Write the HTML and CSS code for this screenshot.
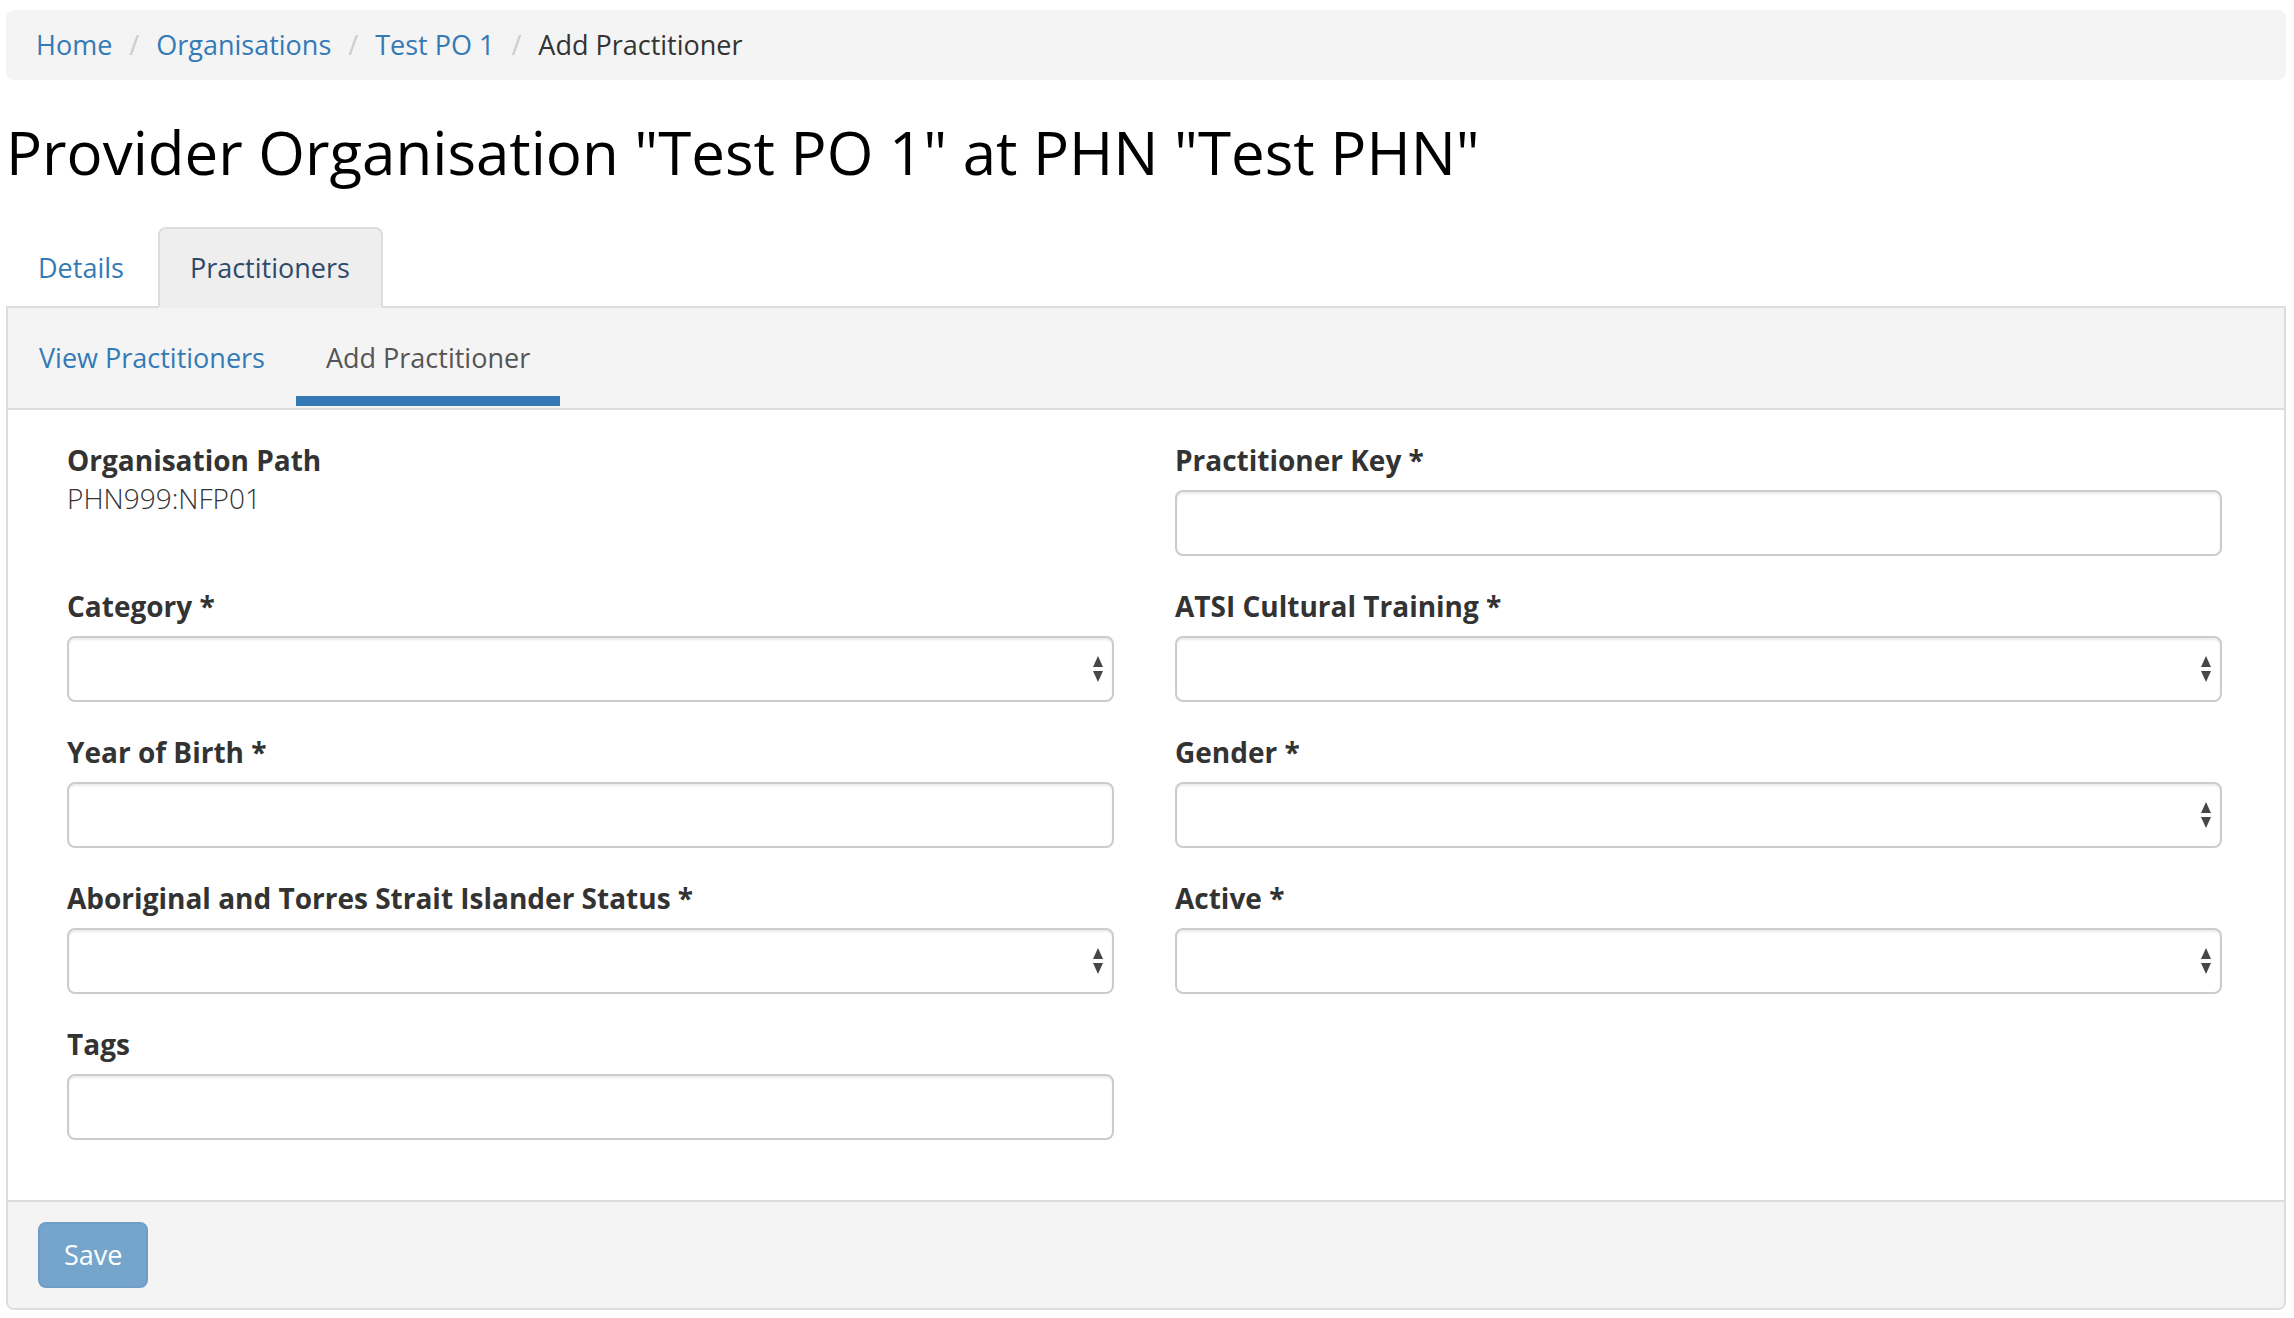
FILE: index.html
```html
<!DOCTYPE html>
<html lang="en">
<head>
<meta charset="utf-8">
<title>Add Practitioner</title>
<link rel="stylesheet" href="styles.css">
</head>
<body>
<div class="page">
  <ol class="breadcrumb">
    <li><a href="#">Home</a></li>
    <li><a href="#">Organisations</a></li>
    <li><a href="#">Test PO 1</a></li>
    <li class="active">Add Practitioner</li>
  </ol>

  <h1 class="title">Provider Organisation "Test PO 1" at PHN "Test PHN"</h1>

  <ul class="tabs">
    <li class="tab"><a href="#">Details</a></li>
    <li class="tab active"><a href="#">Practitioners</a></li>
  </ul>

  <div class="panel">
    <nav class="subnav">
      <a class="subtab" href="#">View Practitioners</a>
      <a class="subtab active" href="#">Add Practitioner</a>
    </nav>

    <form class="form-body">
      <div class="group">
        <label class="label">Organisation Path</label>
        <div class="static">PHN999:NFP01</div>
      </div>
      <div class="group">
        <label class="label">Practitioner Key *</label>
        <input class="control" type="text">
      </div>

      <div class="group">
        <label class="label">Category *</label>
        <div class="select-wrap">
          <select class="control"><option></option></select>
          <svg class="arrows" width="12" height="28" viewBox="0 0 12 28"><polygon points="6,1 11,12 1,12"/><polygon points="1,16 11,16 6,27"/></svg>
        </div>
      </div>
      <div class="group">
        <label class="label">ATSI Cultural Training *</label>
        <div class="select-wrap">
          <select class="control"><option></option></select>
          <svg class="arrows" width="12" height="28" viewBox="0 0 12 28"><polygon points="6,1 11,12 1,12"/><polygon points="1,16 11,16 6,27"/></svg>
        </div>
      </div>

      <div class="group">
        <label class="label">Year of Birth *</label>
        <input class="control" type="text">
      </div>
      <div class="group">
        <label class="label">Gender *</label>
        <div class="select-wrap">
          <select class="control"><option></option></select>
          <svg class="arrows" width="12" height="28" viewBox="0 0 12 28"><polygon points="6,1 11,12 1,12"/><polygon points="1,16 11,16 6,27"/></svg>
        </div>
      </div>

      <div class="group">
        <label class="label">Aboriginal and Torres Strait Islander Status *</label>
        <div class="select-wrap">
          <select class="control"><option></option></select>
          <svg class="arrows" width="12" height="28" viewBox="0 0 12 28"><polygon points="6,1 11,12 1,12"/><polygon points="1,16 11,16 6,27"/></svg>
        </div>
      </div>
      <div class="group">
        <label class="label">Active *</label>
        <div class="select-wrap">
          <select class="control"><option></option></select>
          <svg class="arrows" width="12" height="28" viewBox="0 0 12 28"><polygon points="6,1 11,12 1,12"/><polygon points="1,16 11,16 6,27"/></svg>
        </div>
      </div>

      <div class="group">
        <label class="label">Tags</label>
        <input class="control" type="text">
      </div>
    </form>

    <div class="panel-footer">
      <button class="btn" type="button" disabled>Save</button>
    </div>
  </div>
</div>
</body>
</html>
```

FILE: styles.css
```css
html, body {
  margin: 0;
  padding: 0;
  background: #ffffff;
}

body {
  font-family: "Open Sans", "Noto Sans", "Liberation Sans", sans-serif;
  font-size: 27px;
  line-height: 38px;
  color: #333333;
}

a {
  color: #337ab7;
  text-decoration: none;
}

.page {
  padding: 10px 8px 0 6px;
}

/* Breadcrumb */
.breadcrumb {
  display: flex;
  margin: 0;
  padding: 16px 30px;
  list-style: none;
  background: #f4f4f4;
  border-radius: 8px;
}

.breadcrumb li + li::before {
  content: "/";
  color: #cccccc;
  padding: 0 17px;
}

.breadcrumb .active {
  color: #333333;
}

/* Title */
.title {
  margin: 40px 0 42px;
  font-size: 60px;
  line-height: 65px;
  font-weight: 400;
  color: #000000;
}

/* Tabs */
.tabs {
  display: flex;
  margin: 0;
  padding: 0;
  list-style: none;
}

.tab {
  margin-right: 1px;
  margin-bottom: -2px;
}

.tab a {
  display: block;
  padding: 20px 31px 19px 30px;
  border: 2px solid transparent;
  border-radius: 8px 8px 0 0;
}

.tab.active a {
  background: #eeeeee;
  border-color: #dddddd;
  border-bottom-color: transparent;
  color: #2f4a68;
}

/* Panel */
.panel {
  border: 2px solid #dddddd;
  border-radius: 0 0 8px 8px;
  background: #ffffff;
}

.subnav {
  display: flex;
  gap: 1px;
  padding-left: 1px;
  background: #f4f4f4;
  border-bottom: 2px solid #dddddd;
}

.subtab {
  display: block;
  padding: 31px 30px 19px;
  border-bottom: 10px solid transparent;
  margin-bottom: 2px;
}

.subtab.active {
  color: #555555;
  border-bottom-color: #337ab7;
}

/* Form */
.form-body {
  display: grid;
  grid-template-columns: 1fr 1fr;
  column-gap: 61px;
  row-gap: 31px;
  padding: 31px 62px 60px 59px;
  margin: 0;
}

.group {
  display: flex;
  flex-direction: column;
}

.label {
  display: block;
  font-size: 28px;
  font-weight: 700;
  margin-bottom: 11px;
  color: #333333;
}

.static {
  margin-top: -11px;
  font-size: 28px;
  font-weight: 300;
  color: #333333;
}

.control {
  display: block;
  width: 100%;
  height: 66px;
  box-sizing: border-box;
  margin: 0;
  padding: 12px 24px;
  font: inherit;
  color: #555555;
  background: #ffffff;
  border: 2px solid #cccccc;
  border-radius: 8px;
  box-shadow: inset 0 2px 2px rgba(0, 0, 0, 0.075);
  -webkit-appearance: none;
  appearance: none;
  outline: none;
}

.select-wrap {
  display: grid;
}

.select-wrap > * {
  grid-area: 1 / 1;
}

.arrows {
  justify-self: end;
  align-self: center;
  margin-right: 10px;
  fill: #474747;
  pointer-events: none;
}

/* Footer */
.panel-footer {
  padding: 20px 30px 20px;
  background: #f4f4f4;
  border-top: 2px solid #dddddd;
  border-radius: 0 0 6px 6px;
}

.btn {
  display: block;
  height: 66px;
  padding: 0 24px;
  font: inherit;
  font-weight: 500;
  color: #ffffff;
  background: #76a5cc;
  border: 2px solid #6e9dc8;
  border-radius: 8px;
}
```
